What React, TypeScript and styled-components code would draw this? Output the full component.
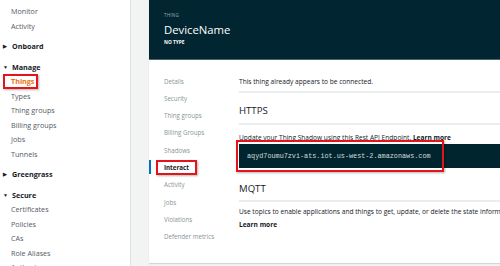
import React from 'react';
import styled, { createGlobalStyle } from 'styled-components';

const GlobalStyle = createGlobalStyle`
  body {
    margin: 0;
    background: #f2f3f3;
    overflow: hidden;
    font-family: 'Open Sans', 'Liberation Sans', sans-serif;
  }
`;

const Page = styled.div`
  display: flex;
  width: 500px;
  height: 266px;
  overflow: hidden;
  background: #f2f3f3;
`;

const Sidebar = styled.nav`
  width: 131px;
  flex-shrink: 0;
  background: #ffffff;
  border-right: 1px solid #dfe3e3;
  padding-top: 4px;
  box-sizing: border-box;
`;

const NavItem = styled.div<{ $active?: boolean }>`
  height: 14.5px;
  line-height: 14.5px;
  padding-left: 11px;
  font-size: 7.2px;
  color: ${(p) => (p.$active ? '#ec7211' : '#545b64')};
  font-weight: ${(p) => (p.$active ? 700 : 400)};
  white-space: nowrap;
`;

const Section = styled.div`
  height: 14.5px;
  line-height: 14.5px;
  margin-top: 6px;
  padding-left: 3px;
  display: flex;
  align-items: center;
  gap: 4px;
  font-size: 7.2px;
  font-weight: 700;
  color: #16191f;
`;

const Caret = styled.span`
  font-size: 5px;
  width: 5px;
  color: #16191f;
`;

const Highlight = styled.span<{ $l: number; $r: number }>`
  display: inline-block;
  line-height: 9px;
  border: 2px solid #e3141b;
  box-shadow: 1px 1px 2px rgba(0, 0, 0, 0.3);
  padding: 1px ${(p) => p.$r}px 1px ${(p) => p.$l}px;
  margin: -3px -${(p) => p.$r + 2}px -3px -${(p) => p.$l + 2}px;
`;

const Main = styled.main`
  flex: 1;
  min-width: 0;
  padding-left: 18px;
`;

const Card = styled.section`
  width: 420px;
  height: 263px;
  background: #ffffff;
  box-shadow: 0 1px 1px rgba(0, 0, 0, 0.12);
  display: flex;
  flex-direction: column;
`;

const Header = styled.header`
  height: 60px;
  flex-shrink: 0;
  box-sizing: border-box;
  background: #012631;
  border-bottom: 1px solid #4a6470;
  padding: 11px 15px 0;
  display: flex;
  flex-direction: column;
`;

const Kicker = styled.div`
  font-size: 4.6px;
  line-height: 8px;
  color: #9aa9ab;
  letter-spacing: 0.2px;
`;

const Title = styled.h1`
  margin: 3px 0 0;
  font-size: 11.3px;
  line-height: 16px;
  font-weight: 400;
  color: #ffffff;
`;

const Subtitle = styled.div`
  font-size: 4.8px;
  line-height: 8px;
  font-weight: 700;
  color: #ffffff;
`;

const Body = styled.div`
  display: flex;
  padding-top: 12.5px;
`;

const Tabs = styled.ul`
  list-style: none;
  margin: 0;
  padding: 0;
  width: 90px;
  flex-shrink: 0;
`;

const Tab = styled.li<{ $active?: boolean }>`
  position: relative;
  height: 17.3px;
  line-height: 17.3px;
  padding-left: 15px;
  font-size: 6.2px;
  color: ${(p) => (p.$active ? '#16191f' : '#879596')};
  font-weight: ${(p) => (p.$active ? 700 : 400)};
  white-space: nowrap;

  &::before {
    content: '';
    display: ${(p) => (p.$active ? 'block' : 'none')};
    position: absolute;
    left: 0;
    top: 1px;
    bottom: 2px;
    width: 2px;
    background: #0073bb;
  }
`;

const Content = styled.div`
  flex: 1;
  min-width: 0;
  white-space: nowrap;
  color: #16191f;
`;

const Note = styled.p`
  margin: 0;
  font-size: 6.6px;
  line-height: 17.3px;
`;

const Rule = styled.hr<{ $top: number }>`
  margin: ${(p) => p.$top}px 0 0;
  border: none;
  height: 2px;
  background: #eaeded;
`;

const Heading = styled.h2<{ $top: number }>`
  margin: ${(p) => p.$top}px 0 0;
  font-size: 9.6px;
  line-height: 16px;
  font-weight: 400;
`;

const Text = styled.p<{ $top: number }>`
  margin: ${(p) => p.$top}px 0 0;
  font-size: 6.6px;
  line-height: 10px;
`;

const Strong = styled.b`
  font-weight: 700;
`;

const CodeBox = styled.div`
  position: relative;
  margin-top: 1px;
  height: 24px;
  line-height: 25px;
  padding-left: 8px;
  background: #00252f;
  color: #d5dbdb;
  font-family: 'Liberation Mono', 'DejaVu Sans Mono', monospace;
  font-size: 6.8px;
`;

const CodeMark = styled.span`
  position: absolute;
  left: -3px;
  top: -4px;
  width: 208px;
  height: 32px;
  box-sizing: border-box;
  border: 2px solid #e3141b;
  box-shadow: 1px 1px 2px rgba(0, 0, 0, 0.3);
`;

const manageItems = ['Types', 'Thing groups', 'Billing groups', 'Jobs', 'Tunnels'];
const secureItems = ['Certificates', 'Policies', 'CAs', 'Role Aliases', 'Authorizers'];
const tabs = [
  'Details',
  'Security',
  'Thing groups',
  'Billing Groups',
  'Shadows',
  'Interact',
  'Activity',
  'Jobs',
  'Violations',
  'Defender metrics',
];

export default function App() {
  return (
    <Page>
      <GlobalStyle />
      <Sidebar>
        <NavItem>Monitor</NavItem>
        <NavItem>Activity</NavItem>
        <Section>
          <Caret>▶</Caret>Onboard
        </Section>
        <Section>
          <Caret>▼</Caret>Manage
        </Section>
        <NavItem $active>
          <Highlight $l={6} $r={2}>Things</Highlight>
        </NavItem>
        {manageItems.map((item) => (
          <NavItem key={item}>{item}</NavItem>
        ))}
        <Section>
          <Caret>▶</Caret>Greengrass
        </Section>
        <Section>
          <Caret>▼</Caret>Secure
        </Section>
        {secureItems.map((item) => (
          <NavItem key={item}>{item}</NavItem>
        ))}
      </Sidebar>
      <Main>
        <Card>
          <Header>
            <Kicker>THING</Kicker>
            <Title>DeviceName</Title>
            <Subtitle>NO TYPE</Subtitle>
          </Header>
          <Body>
            <Tabs>
              {tabs.map((tab) =>
                tab === 'Interact' ? (
                  <Tab key={tab} $active>
                    <Highlight $l={6} $r={6}>{tab}</Highlight>
                  </Tab>
                ) : (
                  <Tab key={tab}>{tab}</Tab>
                ),
              )}
            </Tabs>
            <Content>
              <Note>This thing already appears to be connected.</Note>
              <Rule $top={1} />
              <Heading $top={10}>HTTPS</Heading>
              <Rule $top={4} />
              <Text $top={8}>
                Update your Thing Shadow using this Rest API Endpoint. <Strong>Learn more</Strong>
              </Text>
              <CodeBox>
                aqyd7oumu7zvi-ats.iot.us-west-2.amazonaws.com
                <CodeMark />
              </CodeBox>
              <Heading $top={13}>MQTT</Heading>
              <Rule $top={3} />
              <Text $top={5}>
                Use topics to enable applications and things to get, update, or delete the state information for a Thing (Thing Shadow).
              </Text>
              <Text $top={3}>
                <Strong>Learn more</Strong>
              </Text>
            </Content>
          </Body>
        </Card>
      </Main>
    </Page>
  );
}
